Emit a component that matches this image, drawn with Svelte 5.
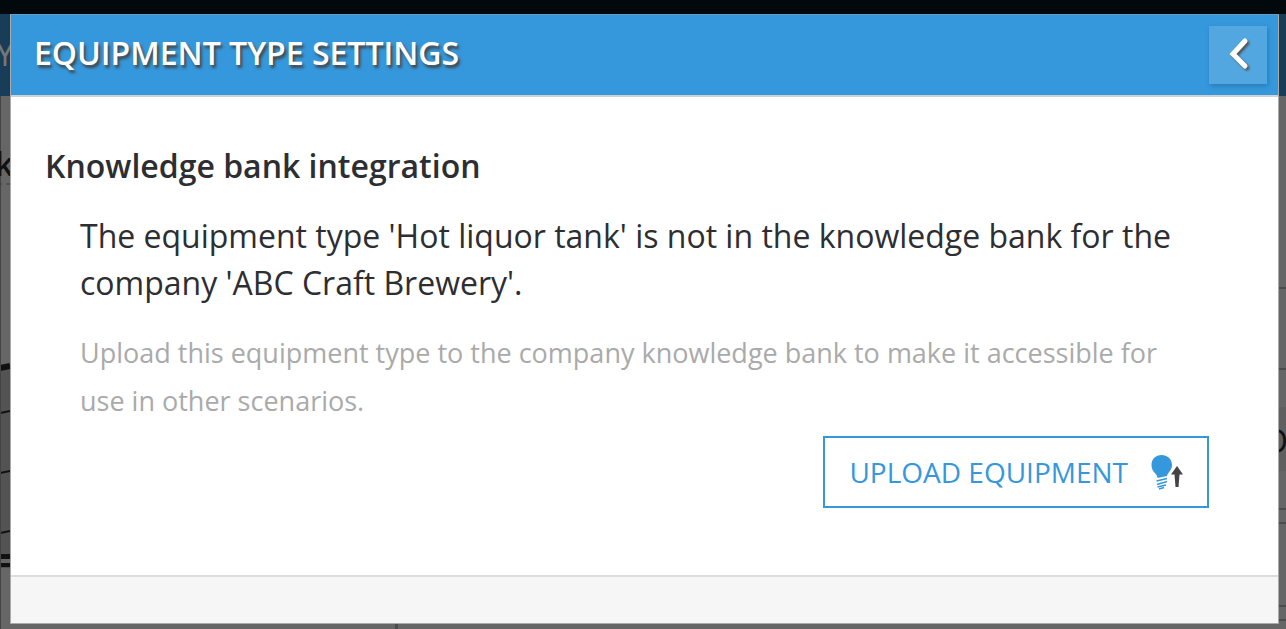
<script>
	let { equipment = 'Hot liquor tank', company = 'ABC Craft Brewery' } = $props();

	const rows = [287, 368, 508, 522, 605, 619];
</script>

<div class="page">
	<div class="behind" aria-hidden="true">
		<div class="topbar"></div>
		<div class="subbar"><span>Y</span></div>
		<div class="canvas">
			<svg class="tank" width="10" height="533" viewBox="0 96 10 533">
				<path d="M0 366 L10 364 V568 H0z" fill="#535353" />
				<path d="M0 184H2M6 184H10" stroke="#505050" stroke-width="2" />
				<path d="M0 368L10 366" stroke="#111" stroke-width="6" />
				<path d="M0 413L10 411M0 473L10 471M0 533L10 531" stroke="#111" stroke-width="2" />
				<path d="M0 561.500H10" stroke="#666" stroke-width="5" />
				<path d="M0 556.500H10" stroke="#111" stroke-width="5" />
				<path d="M0 565H10" stroke="#111" stroke-width="4" />
				<path d="M.5 96V629" stroke="#444" />
			</svg>
			<span class="tank-label">k</span>
			<svg class="panel" width="8" height="533" viewBox="0 96 8 533">
				<path d="M0 407H8V471H0z" fill="#5f5f5f" />
				{#each rows as y}
					<path d="M0 {y + 1}H8" stroke="#4c4c4c" stroke-width="2" />
				{/each}
			</svg>
			<span class="panel-label">D</span>
			<div class="divider"></div>
		</div>
	</div>

	<section class="modal" role="dialog" aria-labelledby="modal-title">
		<header>
			<h1 id="modal-title">EQUIPMENT TYPE SETTINGS</h1>
			<button class="back" aria-label="Back">
				<svg width="58" height="58" viewBox="0 0 58 58">
					<path d="M36 15L24 28L36 40" />
				</svg>
			</button>
		</header>

		<main>
			<h2>Knowledge bank integration</h2>
			<div class="details">
				<p class="status">
					The equipment type '{equipment}' is not in the knowledge bank for the company '{company}'.
				</p>
				<p class="hint">
					Upload this equipment type to the company knowledge bank to make it accessible for use in
					other scenarios.
				</p>
			</div>
			<div class="actions">
				<button class="upload">
					UPLOAD EQUIPMENT
					<svg width="32" height="36" viewBox="0 0 32 36">
						<path
							d="M10.500 1C4.500 1 .5 5.300 .5 11C.5 16 3.500 18.500 5.500 21C6.300 22 6.300 23 6.500 24L16 22C16.300 20 18 18.500 19.500 16C20.500 14.500 21 13 21 11C21 5.300 16.500 1 10.500 1z"
							fill="#3598dc"
						/>
						<path
							d="M5.500 27L16 24.500M6 30.500L16 27.500M6.500 33L15 31M8 35L13 33.500"
							stroke="#3598dc"
							stroke-width="1.600"
						/>
						<path d="M26 12L32 20.500H28.500L27.500 33H24.500L23.500 20.500H20z" fill="#444" />
					</svg>
				</button>
			</div>
		</main>

		<footer></footer>
	</section>
</div>

<style>
	:global(body) {
		margin: 0;
		background: #666;
	}

	.page {
		position: relative;
		display: flex;
		box-sizing: border-box;
		min-height: 100vh;
		padding: 14px 7px 5px 10px;
		overflow: hidden;
		font-family: 'Open Sans', 'Noto Sans', sans-serif;
		color: #2d2e31;
	}

	.behind {
		position: absolute;
		inset: 0;
		display: flex;
		flex-direction: column;
		font-size: 32px;
	}

	.topbar {
		height: 14px;
		background: #02090d;
	}

	.subbar {
		height: 82px;
		background: #183d58;
		color: #777;
		line-height: 80px;
	}

	.subbar span {
		margin-left: -4px;
	}

	.canvas {
		position: relative;
		flex: 1;
		background: #666;
	}

	.tank,
	.panel,
	.tank-label,
	.panel-label,
	.divider {
		position: absolute;
		top: 0;
	}

	.tank {
		left: 0;
	}

	.panel {
		right: 0;
	}

	.tank-label {
		top: 46px;
		left: -5px;
		color: #111;
		font-weight: 600;
	}

	.panel-label {
		top: 323px;
		right: -2px;
		color: #111;
	}

	.divider {
		bottom: 0;
		left: 395px;
		width: 3px;
		background: #4c4c4c;
	}

	.modal {
		position: relative;
		flex: 1;
		display: flex;
		flex-direction: column;
		border: 1px solid #aaa;
		border-top-color: #5f9cc6;
		background: #fff;
	}

	header {
		display: flex;
		align-items: center;
		justify-content: space-between;
		height: 80px;
		padding: 0 11px 0 23px;
		border-bottom: 2px solid #ccd2d6;
		background: #3598dc;
	}

	h1 {
		margin: 0;
		padding-bottom: 4px;
		color: #fff;
		font-size: 32px;
		font-weight: 600;
		line-height: 44px;
		text-shadow: 2px 3px 3px #444;
	}

	button {
		font-family: inherit;
		cursor: pointer;
	}

	.back {
		width: 58px;
		height: 58px;
		padding: 0;
		border: 0;
		background: #53a7e1;
		box-shadow: 1px 2px 5px rgba(0, 0, 0, 0.2);
	}

	.back svg {
		display: block;
	}

	.back path {
		fill: none;
		stroke: #fff;
		stroke-width: 5;
		stroke-linecap: round;
		filter: drop-shadow(2px 2px 1px #555);
	}

	main {
		flex: 1;
		padding: 46px 69px 67px 34px;
	}

	h2 {
		margin: 0;
		font-size: 32px;
		font-weight: 600;
		line-height: 46px;
	}

	.details {
		margin: 23px 23px 11px 35px;
	}

	p {
		margin: 0;
	}

	.status {
		font-size: 32px;
		line-height: 47px;
	}

	.hint {
		margin-top: 23px;
		color: #aaa;
		font-size: 27px;
		line-height: 48px;
	}

	.actions {
		display: flex;
		justify-content: flex-end;
	}

	.upload {
		display: flex;
		align-items: center;
		gap: 23px;
		height: 72px;
		padding: 0 24px;
		border: 2px solid #3598dc;
		background: #fff;
		color: #3598dc;
		font-size: 28px;
	}

	footer {
		height: 46px;
		border-top: 2px solid #ddd;
		background: #f6f6f6;
	}
</style>
